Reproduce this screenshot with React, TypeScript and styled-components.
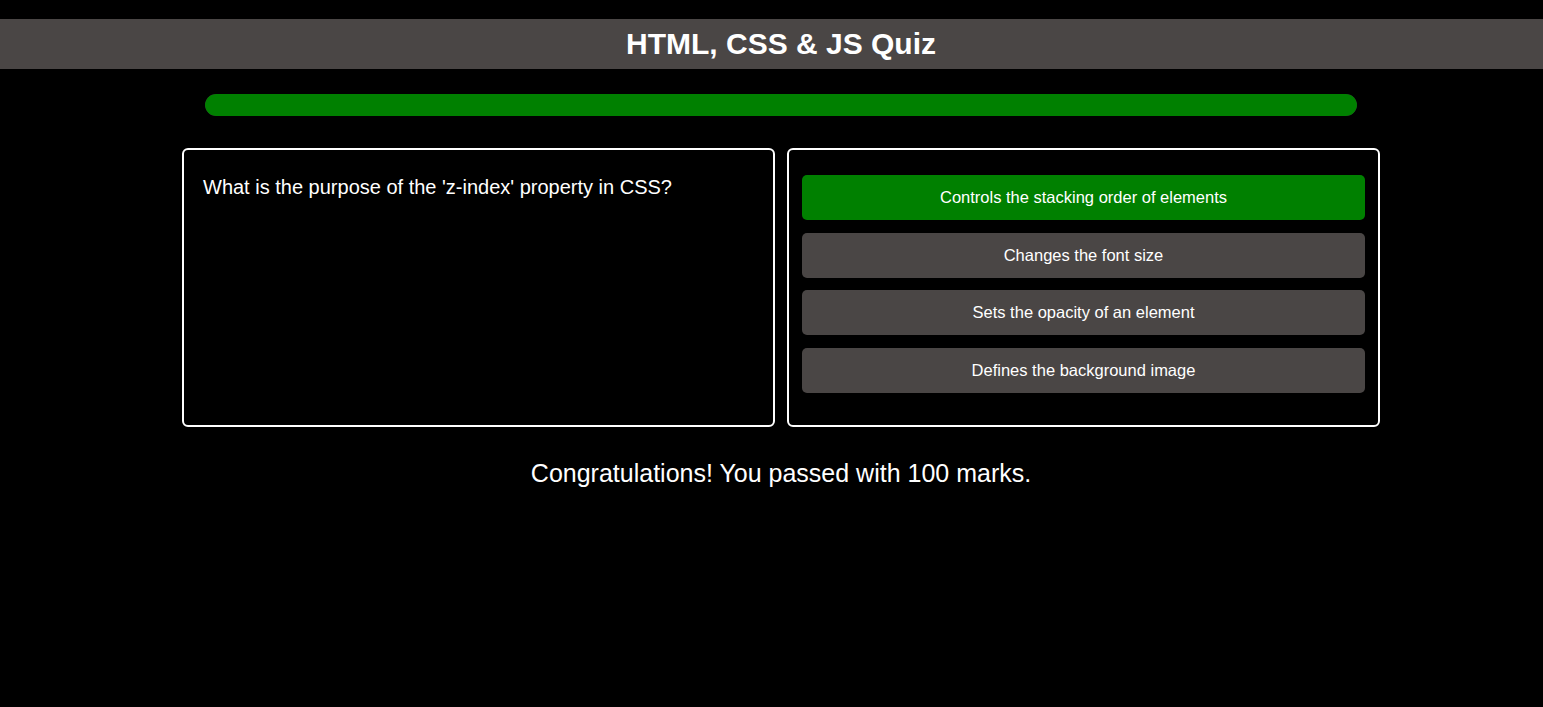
import React from "react";
import styled, { createGlobalStyle } from "styled-components";

const Global = createGlobalStyle`
  html, body { margin: 0; padding: 0; background: #000; }
  body { font-family: "Liberation Sans", Arial, sans-serif; color: #fff; }
`;

const Page = styled.div`
  padding-top: 19px;
  min-height: 707px;
  box-sizing: border-box;
`;

const Header = styled.header`
  background: #4a4645;
  height: 50px;
  display: flex;
  align-items: center;
  justify-content: center;
  padding-left: 19px;
`;

const Title = styled.h1`
  margin: 0;
  font-size: 30px;
  line-height: 34px;
  font-weight: bold;
  color: #fff;
`;

const Main = styled.main`
  padding-left: 19px;
  display: flex;
  flex-direction: column;
  align-items: center;
`;

const Progress = styled.div`
  margin-top: 25px;
  width: 1152px;
  height: 22px;
  background: #333;
  border-radius: 11px;
  overflow: hidden;
`;

const ProgressFill = styled.div`
  height: 100%;
  background: #008000;
  border-radius: 11px;
`;

const Cards = styled.div`
  margin-top: 32px;
  display: grid;
  grid-template-columns: 593px 593px;
  gap: 12px;
`;

const Card = styled.section`
  border: 2px solid #fff;
  border-radius: 6px;
  box-sizing: border-box;
  height: 279px;
`;

const QuestionCard = styled(Card)`
  padding: 26px 19px;
`;

const Question = styled.p`
  margin: 0;
  font-size: 20px;
  line-height: 23px;
`;

const AnswersCard = styled(Card)`
  padding: 25px 13px;
  display: flex;
  flex-direction: column;
  gap: 12.5px;
`;

const Answer = styled.button<{ $correct?: boolean }>`
  height: 45px;
  flex: none;
  border: none;
  border-radius: 5px;
  background: ${(p) => (p.$correct ? "#008000" : "#4a4645")};
  color: #fff;
  font-family: "Liberation Sans", Arial, sans-serif;
  font-size: 16.5px;
  cursor: pointer;
  padding: 0;
`;

const Result = styled.p`
  margin: 32px 0 0;
  font-size: 25px;
  line-height: 28px;
`;

const answers = [
  { text: "Controls the stacking order of elements", correct: true },
  { text: "Changes the font size" },
  { text: "Sets the opacity of an element" },
  { text: "Defines the background image" },
];

export default function App() {
  const progress = 100;
  return (
    <Page>
      <Global />
      <Header>
        <Title>HTML, CSS &amp; JS Quiz</Title>
      </Header>
      <Main>
        <Progress>
          <ProgressFill style={{ width: `${progress}%` }} />
        </Progress>
        <Cards>
          <QuestionCard>
            <Question>What is the purpose of the 'z-index' property in CSS?</Question>
          </QuestionCard>
          <AnswersCard>
            {answers.map((a) => (
              <Answer key={a.text} $correct={a.correct}>
                {a.text}
              </Answer>
            ))}
          </AnswersCard>
        </Cards>
        <Result>Congratulations! You passed with 100 marks.</Result>
      </Main>
    </Page>
  );
}
